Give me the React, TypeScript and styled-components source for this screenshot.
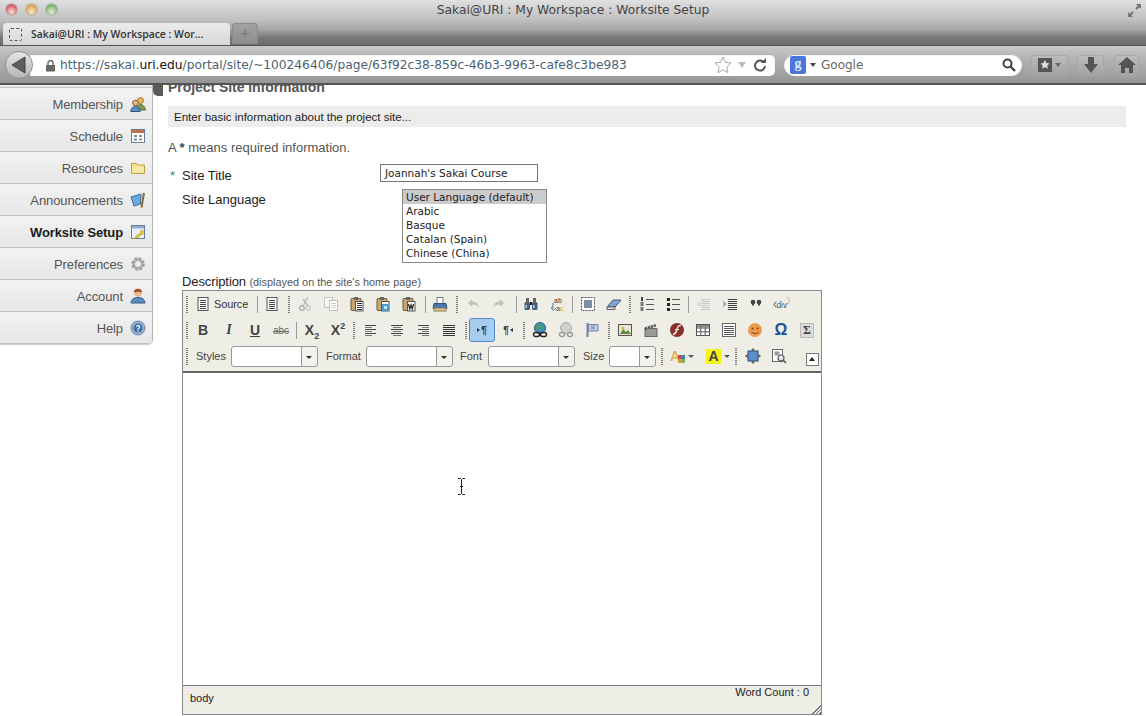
import React from "react";
import styled, { createGlobalStyle } from "styled-components";

const GlobalStyle = createGlobalStyle`
  html, body {
    margin: 0;
    height: 716px;
    overflow: hidden;
    background: #fff;
    font-family: "Liberation Sans", Arial, sans-serif;
  }
`;

const Svg = ({ size = 16, children }: { size?: number; children: React.ReactNode }) => (
  <svg width={size} height={size} viewBox="0 0 16 16">
    {children}
  </svg>
);

const Lines = ({ x, w, ys, c = "#555" }: { x: number; w: number; ys: number[]; c?: string }) => (
  <>
    {ys.map((y) => (
      <rect key={y} x={x} y={y} width={w} height="1" fill={c} />
    ))}
  </>
);

const Clip = ({ children }: { children?: React.ReactNode }) => (
  <>
    <rect x="2" y="2.5" width="10" height="12" rx="1" fill="#c9a66b" stroke="#6b5a3c" />
    <rect x="5" y="1" width="4" height="3" fill="#666" />
    <rect x="6.5" y="5.5" width="7.5" height="9.5" fill="#fff" stroke="#555" />
    {children}
  </>
);

const icons: Record<string, React.ReactNode> = {
  page: (
    <Svg>
      <rect x="3" y="1.5" width="10" height="13" fill="#fff" stroke="#555" />
      <Lines x={5} w={6} ys={[4, 6, 8, 10, 12]} c="#444" />
    </Svg>
  ),
  cut: (
    <Svg>
      <path d="M11 1 6 10M6 3l5 7" stroke="#bbb" strokeWidth="1.4" fill="none" />
      <circle cx="5" cy="12" r="2.2" fill="none" stroke="#b0b0b0" strokeWidth="1.4" />
      <circle cx="11" cy="12" r="2.2" fill="none" stroke="#c8c8c8" strokeWidth="1.4" />
    </Svg>
  ),
  copy: (
    <Svg>
      <rect x="1.5" y="1.5" width="8" height="10" fill="#f8f8f4" stroke="#c4c4c4" />
      <rect x="6.5" y="4.5" width="8" height="10" fill="#fff" stroke="#bdbdbd" />
      <Lines x={8} w={5} ys={[7, 9, 11]} c="#ccc" />
    </Svg>
  ),
  paste: (
    <Svg>
      <Clip>
        <Lines x={8} w={5} ys={[7, 9, 11, 13]} c="#333" />
      </Clip>
    </Svg>
  ),
  pasteText: (
    <Svg>
      <Clip>
        <rect x="7" y="8" width="7" height="7" fill="#4d9bd0" />
        <rect x="9" y="10" width="3" height="3" fill="#bfe4f7" />
      </Clip>
    </Svg>
  ),
  pasteWord: (
    <Svg>
      <Clip>
        <path d="M7.5 8l1.2 5 1.3-4 1.3 4 1.2-5" stroke="#222" fill="none" strokeWidth="1.2" />
      </Clip>
    </Svg>
  ),
  print: (
    <Svg>
      <rect x="5" y="1.5" width="6" height="6" fill="#fff" stroke="#777" />
      <path d="M2 7.5h12l1 5H1z" fill="#4a78b5" stroke="#34527c" />
      <rect x="2" y="12" width="12" height="3" fill="#d9c690" stroke="#8d7f55" />
    </Svg>
  ),
  undo: (
    <Svg>
      <path d="M3 7l4-4v2.6c4 0 6.5 2 6.5 6-1.4-2.4-3.4-3-6.5-3V11z" fill="#c2c2bc" />
    </Svg>
  ),
  redo: (
    <Svg>
      <path d="M13 7L9 3v2.6c-4 0-6.5 2-6.5 6C3.9 9.2 5.9 8.6 9 8.6V11z" fill="#c2c2bc" />
    </Svg>
  ),
  find: (
    <Svg>
      <rect x="1.5" y="6" width="5.5" height="8" rx="1.5" fill="#40607f" />
      <rect x="9" y="6" width="5.5" height="8" rx="1.5" fill="#40607f" />
      <rect x="3" y="2" width="3" height="5" fill="#666" />
      <rect x="10" y="2" width="3" height="5" fill="#666" />
      <rect x="7" y="6" width="2" height="3" fill="#222" />
      <rect x="2.5" y="9" width="1.5" height="3" fill="#b9cbdc" />
      <rect x="10" y="9" width="1.5" height="3" fill="#b9cbdc" />
    </Svg>
  ),
  replace: (
    <Svg>
      <text x="5" y="7" fontSize="7" fontFamily="Liberation Sans" fill="#333">ab</text>
      <text x="7" y="15" fontSize="7" fontFamily="Liberation Sans" fill="#444">a<tspan fill="#c9a23e">c</tspan></text>
      <path d="M4 7v5H2l2.5 2.5L7 12" fill="none" stroke="#3a6ea5" />
    </Svg>
  ),
  selectAll: (
    <Svg>
      <rect x="1.5" y="1.5" width="13" height="13" fill="#fff" stroke="#555" strokeDasharray="2 1" />
      <rect x="4" y="4" width="8" height="8" fill="#7d8ea3" />
    </Svg>
  ),
  eraser: (
    <Svg>
      <path d="M1 11l6-7h8l-6 7z" fill="#7aa7d6" stroke="#42566e" />
      <path d="M1 11h8v2.5H1z" fill="#e8e8e8" stroke="#5a5a5a" />
    </Svg>
  ),
  ol: (
    <Svg>
      <Lines x={7} w={8} ys={[3, 8, 13]} c="#555" />
      <rect x="2" y="1" width="2" height="4" fill="#444" />
      <rect x="1.5" y="6" width="3" height="4" fill="#777" />
      <rect x="1.5" y="11" width="3" height="4" fill="#777" />
    </Svg>
  ),
  ul: (
    <Svg>
      <Lines x={7} w={8} ys={[3, 8, 13]} c="#555" />
      <rect x="2" y="2" width="3" height="3" fill="#222" />
      <rect x="2" y="7" width="3" height="3" fill="#222" />
      <rect x="2" y="12" width="3" height="3" fill="#222" />
    </Svg>
  ),
  outdent: (
    <Svg>
      <Lines x={5} w={9} ys={[3, 5, 7, 9, 11, 13]} c="#c8c8c4" />
      <path d="M1 8l3-3v6z" fill="#d6d6d0" />
    </Svg>
  ),
  indent: (
    <Svg>
      <Lines x={6} w={9} ys={[3, 5, 7, 9, 11, 13]} c="#444" />
      <path d="M5 8L1 5v6z" fill="#9fb3a0" />
    </Svg>
  ),
  quote: (
    <Svg>
      <circle cx="5" cy="6" r="2.3" fill="#444" />
      <path d="M3 6.5h4l-2 4z" fill="#444" />
      <circle cx="11" cy="6" r="2.3" fill="#444" />
      <path d="M9 6.5h4l-2 4z" fill="#444" />
    </Svg>
  ),
  div: (
    <Svg size={18}>
      <path d="M3 6 .8 8.5 3 11" stroke="#777" fill="none" />
      <text x="3" y="11.5" fontSize="7.5" fontFamily="Liberation Sans" fill="#555">div</text>
      <path d="M13 2l2 3-2 3" stroke="#b59a3c" fill="none" strokeDasharray="1 1" />
    </Svg>
  ),
  alignLeft: <Svg><Lines x={2} w={11} ys={[3, 7, 11]} c="#444" /><Lines x={2} w={7} ys={[5, 9, 13]} c="#777" /></Svg>,
  alignCenter: <Svg><Lines x={2} w={12} ys={[3, 7, 11]} c="#444" /><Lines x={4} w={8} ys={[5, 9, 13]} c="#777" /></Svg>,
  alignRight: <Svg><Lines x={3} w={11} ys={[3, 7, 11]} c="#444" /><Lines x={7} w={7} ys={[5, 9, 13]} c="#777" /></Svg>,
  justify: <Svg><Lines x={2} w={12} ys={[3, 5, 7, 9, 11, 13]} c="#333" /></Svg>,
  link: (
    <Svg>
      <circle cx="8" cy="6" r="5.5" fill="#3f8fbf" stroke="#2d5a73" />
      <path d="M4 3l4 1 1 3-4 1zM10 2l2 3-1 2z" fill="#4fa046" />
      <rect x="1.5" y="10.5" width="6" height="4" rx="2" fill="none" stroke="#222" strokeWidth="1.4" />
      <rect x="8.5" y="10.5" width="6" height="4" rx="2" fill="none" stroke="#222" strokeWidth="1.4" />
    </Svg>
  ),
  unlink: (
    <Svg>
      <circle cx="8" cy="6" r="5.5" fill="#cfcfcb" stroke="#aaa" />
      <rect x="1.5" y="10.5" width="5" height="4" rx="2" fill="none" stroke="#999" strokeWidth="1.4" />
      <rect x="9.5" y="10.5" width="5" height="4" rx="2" fill="none" stroke="#999" strokeWidth="1.4" />
    </Svg>
  ),
  anchor: (
    <Svg>
      <rect x="2.5" y="1" width="2" height="14" fill="#7d7fa0" />
      <path d="M4.5 2.5h9.5v6.5H4.5z" fill="#c3d0e6" stroke="#7d7fa0" />
      <path d="M7 3.5h4v4H7z" fill="#8ea5c8" />
    </Svg>
  ),
  image: (
    <Svg>
      <rect x="1.5" y="2.5" width="13" height="11" fill="#e9e6d6" stroke="#555" />
      <path d="M3 12l3-5 3 3 2-2 3 4z" fill="#5d8a45" />
      <circle cx="6" cy="6" r="1.5" fill="#d2b64f" />
    </Svg>
  ),
  clapper: (
    <Svg>
      <rect x="2" y="6.5" width="12" height="8" fill="#9a9a94" stroke="#666" />
      <path d="M1.5 5.5l11-3.5.8 2.5-11 3.5z" fill="#555" />
      <path d="M4 4.8l1 2M7 3.8l1 2M10 2.9l1 2" stroke="#ddd" />
    </Svg>
  ),
  flash: (
    <Svg>
      <circle cx="8" cy="8" r="7" fill="#8a2f2a" />
      <path d="M12 3.5C9 3.5 8.500 5 7.800 8S6.500 12 4 12.500" stroke="#f0e0d8" strokeWidth="1.6" fill="none" />
      <path d="M6 7.5h4" stroke="#f0e0d8" />
    </Svg>
  ),
  table: (
    <Svg>
      <rect x="1.5" y="2.5" width="13" height="11" fill="#fff" stroke="#555" />
      <path d="M1.5 6h13M1.5 9.8h13M5.8 2.5v11M10.2 2.5v11" stroke="#555" />
      <rect x="2" y="3" width="12" height="2.5" fill="#888" />
    </Svg>
  ),
  hr: (
    <Svg>
      <rect x="1.5" y="1.5" width="13" height="13" fill="#fff" stroke="#666" />
      <Lines x={3} w={10} ys={[4, 6, 8, 10, 12]} c="#555" />
    </Svg>
  ),
  smiley: (
    <Svg>
      <circle cx="8" cy="8" r="7" fill="#ec9c4f" />
      <circle cx="5.5" cy="6.5" r="1" fill="#7a3f12" />
      <circle cx="10.5" cy="6.5" r="1" fill="#7a3f12" />
      <path d="M4.5 10c2 2 5 2 7 0" stroke="#7a3f12" fill="none" />
    </Svg>
  ),
  maximize: (
    <Svg>
      <rect x="3" y="3" width="10" height="10" fill="#5d90c9" stroke="#2f4d75" />
      <path d="M8 0l2 2.5H6zM8 16l2-2.5H6zM0 8l2.5-2v4zM16 8l-2.5-2v4z" fill="#555" />
    </Svg>
  ),
  blocks: (
    <Svg>
      <rect x="1.5" y="1.5" width="10" height="12" fill="#fff" stroke="#666" />
      <rect x="3.5" y="3.5" width="5" height="4" fill="#999" />
      <circle cx="10" cy="10" r="3" fill="#dfe8ee" stroke="#555" strokeWidth="1.2" />
      <path d="M12 12l3 3" stroke="#555" strokeWidth="1.6" />
    </Svg>
  ),
  membership: (
    <Svg>
      <circle cx="10.5" cy="4.5" r="3" fill="#e8b860" stroke="#a07a28" />
      <path d="M7 14c0-4 2-5.5 3.5-5.5S15 10 15.5 14z" fill="#78a04a" stroke="#4e6c2c" />
      <circle cx="5.5" cy="7" r="2.8" fill="#e6b78c" stroke="#8a5a30" />
      <path d="M.8 15.5c0-3.5 2.5-5 4.7-5s4.500 1.500 4.700 5z" fill="#5d8fc4" stroke="#38587e" />
    </Svg>
  ),
  schedule: (
    <Svg>
      <rect x="1.5" y="1.5" width="13" height="13" fill="#fff" stroke="#6a7f95" />
      <rect x="2" y="2" width="12" height="3" fill="#c0724e" />
      <rect x="4" y="7" width="3" height="2" fill="#888" />
      <rect x="9" y="7" width="3" height="2" fill="#888" />
      <rect x="4" y="10.5" width="3" height="2" fill="#5d8fc4" />
      <rect x="9" y="10.5" width="3" height="2" fill="#999" />
    </Svg>
  ),
  folder: (
    <Svg>
      <path d="M1.5 3.5h5l1 1.5h7v8.5h-13z" fill="#f5e08e" stroke="#b8a04c" />
      <rect x="2.5" y="6.5" width="11" height="6" fill="#f8eaa8" />
    </Svg>
  ),
  announce: (
    <Svg>
      <path d="M1 5l10-3-.5 10L4 14z" fill="#6da9dc" stroke="#3d6d9c" />
      <path d="M14 1l-2.500 14.500" stroke="#8a6a3c" strokeWidth="2" />
    </Svg>
  ),
  setup: (
    <Svg>
      <rect x="1.5" y="1.5" width="13" height="13" fill="#eaf0f6" stroke="#6a7f95" />
      <rect x="2" y="2" width="12" height="2.5" fill="#8fb0d0" />
      <path d="M13 6l-3 1.500 1 1L6 12l-2 3 4-1.500 4-3.500 1 1z" fill="#e3c53c" stroke="#b09420" strokeWidth=".5" />
    </Svg>
  ),
  gear: (
    <Svg>
      <circle cx="8" cy="8" r="5" fill="none" stroke="#999" strokeWidth="3.5" strokeDasharray="2.4 1.53" />
      <circle cx="8" cy="8" r="4.2" fill="none" stroke="#aaa" strokeWidth="2.4" />
    </Svg>
  ),
  account: (
    <Svg>
      <circle cx="8" cy="5" r="3.8" fill="#eab78c" />
      <path d="M3.800 4.500C4 1.500 6 .8 8 .8s4 .7 4.200 3.700c-2-.9-6-.9-8.400 0z" fill="#a04f28" />
      <path d="M1 15c0-3.500 3-5.500 7-5.500s7 2 7 5.500z" fill="#5d8fc4" stroke="#38587e" />
    </Svg>
  ),
  help: (
    <Svg>
      <circle cx="8" cy="8" r="7" fill="#9ab3cc" stroke="#6d8bab" />
      <circle cx="8" cy="8" r="4.6" fill="#3e74ad" />
      <path d="M6.400 6.800C6.600 5.200 9.600 5.200 9.700 7 9.700 8.200 8 8.200 8 9.500" stroke="#fff" fill="none" strokeWidth="1.2" />
      <rect x="7.4" y="10.3" width="1.3" height="1.3" fill="#fff" />
    </Svg>
  ),
};

const App = () => (
  <>
    <GlobalStyle />
    <Page>
      <TitleBar>
        <Lights>
          <Light $c="#d8606c" />
          <Light $c="#d9a94e" />
          <Light $c="#79b96b" />
        </Lights>
        <WindowTitle>Sakai@URI : My Workspace : Worksite Setup</WindowTitle>
        <FullScreen>
          <svg width="13" height="13" viewBox="0 0 13 13">
            <path d="M13 0H8l1.700 1.700-2.500 2.500 1.600 1.600 2.500-2.500L13 5zM0 13h5l-1.700-1.700 2.500-2.500-1.600-1.600-2.500 2.500L0 8z" fill="#777" />
          </svg>
        </FullScreen>
      </TitleBar>
      <TabStrip>
        <ActiveTab>
          <TabFavicon />
          <TabLabel>Sakai@URI : My Workspace : Wor...</TabLabel>
        </ActiveTab>
        <NewTab>+</NewTab>
      </TabStrip>
      <NavBar>
        <BackButton>
          <svg width="16" height="18" viewBox="0 0 16 18">
            <path d="M14 1v16L1 9z" fill="#5d5d5d" stroke="#444" />
          </svg>
        </BackButton>
        <UrlBox>
          <svg width="11" height="13" viewBox="0 0 11 13">
            <path d="M3 6V4a2.500 2.500 0 0 1 5 0v2" stroke="#666" strokeWidth="1.4" fill="none" />
            <rect x="1" y="6" width="9" height="6.5" fill="#666" />
          </svg>
          <UrlText>
            <span>https://sakai.</span>
            <strong>uri.edu</strong>
            <span>/portal/site/~100246406/page/63f92c38-859c-46b3-9963-cafe8c3be983</span>
          </UrlText>
          <svg width="20" height="20" viewBox="0 0 20 20">
            <path d="M10 2l2.400 5.300 5.600.7-4.100 3.900 1.100 5.800-5-2.900-5 2.900 1.100-5.800L2 8l5.600-.7z" fill="#fff" stroke="#aaa" />
          </svg>
          <UrlCaret />
          <svg width="14" height="14" viewBox="0 0 14 14">
            <path d="M11 4.500A5 5 0 1 0 12 8" stroke="#555" strokeWidth="2" fill="none" />
            <path d="M8 5h5V0z" fill="#555" />
          </svg>
        </UrlBox>
        <SearchBox>
          <GoogleBadge>g</GoogleBadge>
          <SearchCaret />
          <SearchText>Google</SearchText>
          <svg width="14" height="14" viewBox="0 0 14 14">
            <circle cx="5.5" cy="5.5" r="4" fill="none" stroke="#444" strokeWidth="2" />
            <path d="M8.500 8.500 13 13" stroke="#444" strokeWidth="2.4" />
          </svg>
        </SearchBox>
        <ChromeButton $w={37} $ml={9}>
          <svg width="26" height="16" viewBox="0 0 26 16">
            <rect x="1" y="1" width="14" height="14" fill="#555" />
            <path d="M8 3l1.500 3 3 .4-2.200 2.200.6 3.200L8 10.300l-2.900 1.500.6-3.200-2.200-2.200 3-.4z" fill="#ddd" />
            <path d="M18 6h6l-3 4z" fill="#666" />
          </svg>
        </ChromeButton>
        <ChromeButton $w={27} $ml={9}>
          <svg width="16" height="18" viewBox="0 0 16 18">
            <path d="M5 1h6v7h4l-7 9-7-9h4z" fill="#555" />
          </svg>
        </ChromeButton>
        <ChromeButton $w={25} $ml={10}>
          <svg width="18" height="18" viewBox="0 0 18 18">
            <path d="M9 1 0 9h3v8h4v-5h4v5h4V9h3z" fill="#555" />
          </svg>
        </ChromeButton>
      </NavBar>

      <Body>
        <Sidebar>
          <SideTop />
          {menu.map((m) => (
            <SideItem key={m.label}>
              <SideLabel $active={m.active}>{m.label}</SideLabel>
              {icons[m.icon]}
            </SideItem>
          ))}
        </Sidebar>

        <Main>
          <Heading>
            <HeadingMark />
            <HeadingText>Project Site Information</HeadingText>
          </Heading>
          <InfoBar>Enter basic information about the project site...</InfoBar>
          <Required>
            A <Star>*</Star> means required information.
          </Required>
          <TitleRow>
            <ReqMark>*</ReqMark>
            <TitleLabel $w={198}>Site Title</TitleLabel>
            <TitleInput>Joannah's Sakai Course</TitleInput>
          </TitleRow>
          <LanguageRow>
            <FieldLabel $w={220}>Site Language</FieldLabel>
            <LangList>
              {languages.map((l, i) => (
                <LangOption key={l} $selected={i === 0}>
                  {l}
                </LangOption>
              ))}
            </LangList>
          </LanguageRow>
          <DescLabel>
            Description <small>(displayed on the site's home page)</small>
          </DescLabel>

          <Editor>
            <Toolbar>
              <ToolRow>
                <Grip $mr={7} />
                <SourceTool>
                  {icons.page}
                  <span>Source</span>
                </SourceTool>
                <Sep $ml={4} $mr={1} />
                <Tool>{icons.page}</Tool>
                <Grip $ml={3} $mr={2} />
                <Tool>{icons.cut}</Tool>
                <Tool>{icons.copy}</Tool>
                <Tool>{icons.paste}</Tool>
                <Tool>{icons.pasteText}</Tool>
                <Tool>{icons.pasteWord}</Tool>
                <Sep $ml={3} $mr={1} />
                <Tool>{icons.print}</Tool>
                <Grip $ml={3} $mr={2} />
                <Tool>{icons.undo}</Tool>
                <Tool>{icons.redo}</Tool>
                <Sep $ml={4} $mr={1} />
                <Tool>{icons.find}</Tool>
                <Tool>{icons.replace}</Tool>
                <Sep $ml={2} $mr={2} />
                <Tool>{icons.selectAll}</Tool>
                <Tool>{icons.eraser}</Tool>
                <Grip $ml={2} $mr={3} />
                <Tool>{icons.ol}</Tool>
                <Tool>{icons.ul}</Tool>
                <Sep $ml={2} $mr={2} />
                <Tool>{icons.outdent}</Tool>
                <Tool>{icons.indent}</Tool>
                <Tool>{icons.quote}</Tool>
                <Tool>{icons.div}</Tool>
              </ToolRow>
              <ToolRow>
                <Grip $mr={2} />
                <Tool><Glyph $bold>B</Glyph></Tool>
                <Tool><Glyph $italic>I</Glyph></Tool>
                <Tool><Glyph $bold $under>U</Glyph></Tool>
                <Tool><Strike>abc</Strike></Tool>
                <Sep $ml={2} $mr={2} />
                <Tool><Glyph $bold>X<sub>2</sub></Glyph></Tool>
                <Tool><Glyph $bold>X<sup>2</sup></Glyph></Tool>
                <Grip $ml={2} $mr={3} />
                <Tool>{icons.alignLeft}</Tool>
                <Tool>{icons.alignCenter}</Tool>
                <Tool>{icons.alignRight}</Tool>
                <Tool>{icons.justify}</Tool>
                <Grip $ml={3} $mr={2} />
                <Tool $active><Para><Arrow $dir="right" />¶</Para></Tool>
                <Tool><Para>¶<Arrow $dir="left" /></Para></Tool>
                <Grip $ml={2} $mr={2} />
                <Tool>{icons.link}</Tool>
                <Tool>{icons.unlink}</Tool>
                <Tool>{icons.anchor}</Tool>
                <Grip $ml={3} $mr={2} />
                <Tool>{icons.image}</Tool>
                <Tool>{icons.clapper}</Tool>
                <Tool>{icons.flash}</Tool>
                <Tool>{icons.table}</Tool>
                <Tool>{icons.hr}</Tool>
                <Tool>{icons.smiley}</Tool>
                <Tool><Omega>Ω</Omega></Tool>
                <Tool><Sigma>Σ</Sigma></Tool>
              </ToolRow>
              <ToolRow>
                <Grip $mr={8} />
                <ComboLabel $w={35}>Styles</ComboLabel>
                <Combo $w={87} />
                <ComboLabel $w={40} $ml={8}>Format</ComboLabel>
                <Combo $w={87} />
                <ComboLabel $w={28} $ml={7}>Font</ComboLabel>
                <Combo $w={87} />
                <ComboLabel $w={26} $ml={8}>Size</ComboLabel>
                <Combo $w={47} />
                <Grip $ml={5} $mr={4} />
                <ColorTool $w={36}>
                  <TextColorA>A</TextColorA>
                  <Swatches />
                  <MiniCaret />
                </ColorTool>
                <ColorTool $w={29}>
                  <BgColorA>A</BgColorA>
                  <MiniCaret />
                </ColorTool>
                <Grip $ml={3} $mr={3} />
                <Tool>{icons.maximize}</Tool>
                <Tool>{icons.blocks}</Tool>
                <Collapse />
              </ToolRow>
            </Toolbar>
            <EditArea>
              <IBeam>
                <svg width="9" height="17" viewBox="0 0 9 17">
                  <path d="M1 .5h2.500l1 1 1-1H8M4.500 1.500v14M1 16.500h2.500l1-1 1 1H8M3 8.500h3" stroke="#222" fill="none" />
                </svg>
              </IBeam>
            </EditArea>
            <StatusBar>
              <PathLabel>body</PathLabel>
              <span>Word Count : 0</span>
              <Resize />
            </StatusBar>
          </Editor>
        </Main>
      </Body>
    </Page>
  </>
);

const menu = [
  { label: "Membership", icon: "membership" },
  { label: "Schedule", icon: "schedule" },
  { label: "Resources", icon: "folder" },
  { label: "Announcements", icon: "announce" },
  { label: "Worksite Setup", icon: "setup", active: true },
  { label: "Preferences", icon: "gear" },
  { label: "Account", icon: "account" },
  { label: "Help", icon: "help" },
];

const languages = ["User Language (default)", "Arabic", "Basque", "Catalan (Spain)", "Chinese (China)"];

const Page = styled.div`
  width: 1146px;
  height: 716px;
  display: flex;
  flex-direction: column;
  overflow: hidden;
`;

const TitleBar = styled.div`
  height: 21px;
  flex: none;
  display: flex;
  align-items: center;
  padding: 0 4px 2px 6px;
  box-sizing: border-box;
  background: linear-gradient(#e0e0e0, #bebebe);
`;

const Lights = styled.div`
  display: flex;
  gap: 9px;
  width: 70px;
`;

const Light = styled.div<{ $c: string }>`
  width: 11px;
  height: 11px;
  border-radius: 50%;
  background: radial-gradient(circle at 50% 70%, #f4e4d8 0, ${(p) => p.$c} 65%);
  box-shadow: 0 0 0 0.5px #888;
`;

const WindowTitle = styled.div`
  flex: 1;
  text-align: center;
  font-family: "DejaVu Sans", sans-serif;
  font-size: 12.3px;
  color: #444;
  padding-right: 58px;
`;

const FullScreen = styled.div`
  width: 14px;
  height: 14px;
`;

const TabStrip = styled.div`
  height: 25px;
  flex: none;
  display: flex;
  align-items: flex-end;
  padding-left: 3px;
  gap: 2px;
  box-sizing: border-box;
  border-bottom: 1px solid #555;
  background: linear-gradient(#bcbcbc, #a5a5a5 35%, #777 70%, #6d6d6d);
`;

const ActiveTab = styled.div`
  width: 227px;
  height: 22px;
  box-sizing: border-box;
  display: flex;
  align-items: center;
  padding-left: 6px;
  gap: 9px;
  border-radius: 4px 4px 0 0;
  background: linear-gradient(#ececec, #d6d6d6);
`;

const TabFavicon = styled.div`
  width: 13px;
  height: 13px;
  flex: none;
  box-sizing: border-box;
  border: 1px dashed #555;
  border-radius: 2px;
`;

const TabLabel = styled.div`
  font-family: "Open Sans", sans-serif;
  font-size: 10.4px;
  font-weight: 600;
  color: #333;
  white-space: nowrap;
`;

const NewTab = styled.div`
  width: 26px;
  height: 21px;
  margin-bottom: 1px;
  border-radius: 4px 4px 0 0;
  border: 1px solid #8a8a8a;
  border-bottom: 0;
  box-sizing: border-box;
  text-align: center;
  font: 16px/19px "Liberation Sans", sans-serif;
  color: #777;
  background: linear-gradient(#a2a2a2, #8c8c8c);
`;

const NavBar = styled.div`
  height: 39px;
  flex: none;
  display: flex;
  align-items: center;
  padding: 1px 6px 0 5px;
  box-sizing: border-box;
  border-bottom: 2px solid #555;
  background: linear-gradient(#c8c8c8, #b0b0b0 40%, #969696);
`;

const BackButton = styled.div`
  position: relative;
  z-index: 1;
  width: 28px;
  height: 28px;
  flex: none;
  box-sizing: border-box;
  margin-right: -3px;
  display: flex;
  align-items: center;
  justify-content: center;
  border-radius: 50%;
  border: 1px solid #8f8f8f;
  background: linear-gradient(#e6e6e6, #b5b5b5);
`;

const UrlBox = styled.div`
  width: 745px;
  height: 22px;
  flex: none;
  box-sizing: border-box;
  display: flex;
  align-items: center;
  padding: 0 8px 0 15px;
  border-radius: 0 5px 5px 0;
  background: #fff;
  box-shadow: inset 0 1px 1px #aaa;
`;

const UrlText = styled.div`
  flex: 1;
  margin-left: 4px;
  font-family: "DejaVu Sans", sans-serif;
  font-size: 12.24px;
  color: #4d5f73;
  white-space: nowrap;
  overflow: hidden;
  strong {
    font-weight: 400;
    color: #111;
  }
`;

const Caret = styled.div`
  width: 0;
  height: 0;
  border-left: 4px solid transparent;
  border-right: 4px solid transparent;
  border-top: 6px solid #444;
`;

const UrlCaret = styled(Caret)`
  margin: 0 7px 0 5px;
  border-top-color: #bbb;
`;

const SearchBox = styled.div`
  width: 238px;
  height: 22px;
  flex: none;
  margin-left: 9px;
  box-sizing: border-box;
  display: flex;
  align-items: center;
  padding: 0 6px 0 6px;
  border-radius: 11px;
  background: #fff;
  box-shadow: inset 0 1px 1px #aaa;
`;

const GoogleBadge = styled.div`
  width: 16px;
  height: 18px;
  flex: none;
  border-radius: 2px;
  background: #4a78d8;
  color: #dfe9ff;
  font: bold 14px/15px "Liberation Serif", serif;
  text-align: center;
`;

const SearchCaret = styled(Caret)`
  margin: 0 5px 0 4px;
  border-width: 4px 3px 0;
`;

const SearchText = styled.div`
  flex: 1;
  font-family: "DejaVu Sans", sans-serif;
  font-size: 12px;
  color: #666;
`;

const ChromeButton = styled.div<{ $w: number; $ml: number }>`
  width: ${(p) => p.$w}px;
  height: 21px;
  flex: none;
  margin-left: ${(p) => p.$ml}px;
  box-sizing: border-box;
  display: flex;
  align-items: center;
  justify-content: center;
  border: 1px solid #a8a8a8;
  border-radius: 3px;
  background: linear-gradient(#bcbcbc, #a2a2a2);
`;

const Body = styled.div`
  flex: 1;
  display: flex;
  min-height: 0;
  background: #fff;
`;

const Sidebar = styled.div`
  width: 153px;
  flex: none;
  align-self: flex-start;
  box-sizing: border-box;
  border-right: 1px solid #b5b5b5;
  border-radius: 0 0 5px 0;
  overflow: hidden;
  box-shadow: 0 1px 1px #ccc;
`;

const SideTop = styled.div`
  height: 3px;
  background: #ececec;
  border-bottom: 1px solid #c4c4c4;
  box-sizing: border-box;
`;

const SideItem = styled.div`
  height: 32px;
  box-sizing: border-box;
  display: flex;
  align-items: center;
  justify-content: flex-end;
  gap: 7px;
  padding: 1px 6px 0 0;
  border-bottom: 1px solid #c2c2c2;
  background: linear-gradient(#f3f3f3, #e6e6e6);
`;

const SideLabel = styled.span<{ $active?: boolean }>`
  font-size: 13px;
  letter-spacing: -0.1px;
  font-weight: ${(p) => (p.$active ? 700 : 400)};
  color: ${(p) => (p.$active ? "#1a1a1a" : "#555")};
`;

const Main = styled.div`
  flex: 1;
  min-width: 0;
  display: flex;
  flex-direction: column;
  overflow: hidden;
`;

const Heading = styled.div`
  display: flex;
  align-items: flex-end;
  margin-top: -7px;
  height: 18px;
  flex: none;
`;

const HeadingMark = styled.div`
  width: 10px;
  height: 11px;
  margin-right: 5px;
  background: #5a5a5a;
  border-radius: 0 0 0 5px;
`;

const HeadingText = styled.div`
  font-size: 14px;
  font-weight: 700;
  line-height: 18px;
  letter-spacing: -0.05px;
  color: #555;
`;

const InfoBar = styled.div`
  flex: none;
  height: 21px;
  margin: 10px 20px 0 15px;
  padding-left: 6px;
  font-size: 11.5px;
  line-height: 22px;
  color: #222;
  background: #ececec;
`;

const Required = styled.div`
  flex: none;
  margin: 12px 0 0 15px;
  font-size: 13px;
  line-height: 18px;
  color: #555;
`;

const Star = styled.span`
  font-weight: 700;
  color: #345;
`;

const TitleRow = styled.div`
  flex: none;
  display: flex;
  margin: 7px 0 0 15px;
`;

const ReqMark = styled.div`
  width: 14px;
  padding: 3px 0 0 2px;
  box-sizing: border-box;
  font-size: 13px;
  line-height: 18px;
  color: #3a7f7a;
`;

const FieldLabel = styled.div<{ $w: number }>`
  width: ${(p) => p.$w}px;
  flex: none;
  padding-top: 2px;
  font-size: 13px;
  line-height: 18px;
  color: #222;
`;

const TitleLabel = styled(FieldLabel)`
  padding-top: 3px;
`;

const TitleInput = styled.div`
  width: 158px;
  height: 18px;
  box-sizing: border-box;
  padding-left: 4px;
  border: 1px solid #777;
  font-family: "DejaVu Sans", sans-serif;
  font-size: 10.5px;
  line-height: 16px;
  color: #222;
  white-space: nowrap;
`;

const LanguageRow = styled.div`
  flex: none;
  display: flex;
  margin: 4px 0 0 29px;
`;

const LangList = styled.div`
  width: 145px;
  height: 74px;
  box-sizing: border-box;
  border: 1px solid #888;
`;

const LangOption = styled.div<{ $selected?: boolean }>`
  height: 14px;
  padding-left: 3px;
  font-family: "DejaVu Sans", sans-serif;
  font-size: 10.5px;
  line-height: 15px;
  color: #222;
  white-space: nowrap;
  background: ${(p) => (p.$selected ? "#cbcbcb" : "#fff")};
`;

const DescLabel = styled.div`
  flex: none;
  margin: 9px 0 0 29px;
  height: 18px;
  font-size: 13px;
  line-height: 20px;
  letter-spacing: -0.1px;
  color: #222;
  small {
    font-size: 10.9px;
    letter-spacing: 0;
    color: #555;
  }
`;

const Editor = styled.div`
  position: relative;
  flex: none;
  width: 640px;
  height: 425px;
  margin-left: 29px;
  box-sizing: border-box;
  display: flex;
  flex-direction: column;
  border: 1px solid #8a8a8a;
  background: #fff;
`;

const Toolbar = styled.div`
  flex: none;
  height: 82px;
  box-sizing: border-box;
  border-bottom: 2px solid #666;
  background: #eeeee6;
`;

const ToolRow = styled.div`
  display: flex;
  align-items: center;
  height: 26px;
`;

const Grip = styled.div<{ $ml?: number; $mr?: number }>`
  width: 2px;
  height: 17px;
  flex: none;
  margin: 0 ${(p) => p.$mr ?? 0}px 0 ${(p) => p.$ml ?? 3}px;
  background: repeating-linear-gradient(#777 0 1px, #eeeee6 1px 2px);
`;

const Sep = styled.div<{ $ml: number; $mr: number }>`
  width: 1px;
  height: 17px;
  flex: none;
  margin: 0 ${(p) => p.$mr}px 0 ${(p) => p.$ml}px;
  background: #999;
`;

const Tool = styled.div<{ $active?: boolean }>`
  width: 26px;
  height: 24px;
  flex: none;
  box-sizing: border-box;
  display: flex;
  align-items: center;
  justify-content: center;
  border-radius: 3px;
  border: 1px solid ${(p) => (p.$active ? "#4f8cc4" : "transparent")};
  background: ${(p) => (p.$active ? "#a6cdf0" : "transparent")};
`;

const SourceTool = styled.div`
  width: 58px;
  height: 24px;
  flex: none;
  box-sizing: border-box;
  display: flex;
  align-items: center;
  gap: 3px;
  font-size: 11px;
  letter-spacing: -0.1px;
  color: #333;
`;

const Glyph = styled.span<{ $bold?: boolean; $italic?: boolean; $under?: boolean }>`
  font-family: ${(p) => (p.$italic ? '"Liberation Serif", serif' : '"Liberation Sans", sans-serif')};
  font-size: 14px;
  line-height: 16px;
  font-weight: ${(p) => (p.$bold || p.$italic ? 700 : 400)};
  font-style: ${(p) => (p.$italic ? "italic" : "normal")};
  text-decoration: ${(p) => (p.$under ? "underline" : "none")};
  color: #444;
  sub, sup {
    font-size: 9px;
    line-height: 0;
  }
`;

const Strike = styled.span`
  font-size: 10px;
  color: #666;
  text-decoration: line-through;
`;

const Para = styled.span`
  display: flex;
  align-items: center;
  gap: 1px;
  font: bold 10px "Liberation Sans", sans-serif;
  color: #333;
  white-space: nowrap;
`;

const Arrow = styled.span<{ $dir: "left" | "right" }>`
  width: 0;
  height: 0;
  border-top: 2px solid transparent;
  border-bottom: 2px solid transparent;
  ${(p) => (p.$dir === "right" ? "border-left: 3px solid #333;" : "border-right: 3px solid #333;")}
`;

const Omega = styled.span`
  font: bold 16px "Liberation Sans", sans-serif;
  color: #234f96;
`;

const Sigma = styled.span`
  width: 14px;
  height: 15px;
  background: #ddd;
  border: 1px solid #bbb;
  box-sizing: border-box;
  text-align: center;
  font: bold 12px/13px "Liberation Serif", serif;
  color: #444;
`;

const ComboLabel = styled.div<{ $w: number; $ml?: number }>`
  width: ${(p) => p.$w}px;
  flex: none;
  margin-left: ${(p) => p.$ml ?? 0}px;
  font-size: 11px;
  color: #444;
`;

const Combo = styled.div<{ $w: number }>`
  position: relative;
  width: ${(p) => p.$w}px;
  height: 21px;
  flex: none;
  box-sizing: border-box;
  border: 1px solid #999;
  border-radius: 3px;
  background: linear-gradient(90deg, #fff calc(100% - 16px), #999 calc(100% - 16px), #999 calc(100% - 15px), #f2f2ea calc(100% - 15px));
  &::after {
    content: "";
    position: absolute;
    right: 5px;
    top: 9px;
    border-left: 3px solid transparent;
    border-right: 3px solid transparent;
    border-top: 3px solid #333;
  }
`;

const ColorTool = styled.div<{ $w: number }>`
  width: ${(p) => p.$w}px;
  height: 18px;
  flex: none;
  display: flex;
  align-items: center;
  padding-left: 3px;
  box-sizing: border-box;
`;

const TextColorA = styled.span`
  font: bold 14px/16px "Liberation Sans", sans-serif;
  color: #d8b45a;
`;

const BgColorA = styled.span`
  width: 15px;
  height: 15px;
  text-align: center;
  background: #f6f316;
  font: bold 14px/15px "Liberation Sans", sans-serif;
  color: #444;
`;

const Swatches = styled.div`
  width: 7px;
  height: 8px;
  margin: 6px 0 0 -2px;
  background: conic-gradient(#3b7fc4 25%, #7ab648 0 50%, #d8a030 0 75%, #c44a4a 0);
`;

const MiniCaret = styled.div`
  margin-left: 3px;
  border-left: 3px solid transparent;
  border-right: 3px solid transparent;
  border-top: 3px solid #555;
`;

const Collapse = styled.div`
  position: relative;
  width: 13px;
  height: 13px;
  flex: none;
  margin: 6px 2px 0 auto;
  box-sizing: border-box;
  border: 1px solid #777;
  background: #fff;
  &::after {
    content: "";
    position: absolute;
    left: 2px;
    top: 3px;
    border-left: 3.5px solid transparent;
    border-right: 3.5px solid transparent;
    border-bottom: 4px solid #222;
  }
`;

const EditArea = styled.div`
  position: relative;
  flex: 1;
  min-height: 0;
  border-bottom: 1px solid #777;
`;

const IBeam = styled.div`
  position: absolute;
  left: 274px;
  top: 105px;
  line-height: 0;
`;

const StatusBar = styled.div`
  position: relative;
  flex: none;
  height: 28px;
  box-sizing: border-box;
  padding: 0 12px 0 7px;
  display: flex;
  justify-content: space-between;
  font-size: 11px;
  line-height: 13px;
  color: #222;
  background: #eeeee6;
`;

const PathLabel = styled.span`
  margin-top: 6px;
`;

const Resize = styled.div`
  position: absolute;
  right: 0;
  bottom: 0;
  width: 11px;
  height: 11px;
  background: repeating-linear-gradient(135deg, transparent 0 1.5px, #777 1.5px 2.5px);
  clip-path: polygon(100% 0, 100% 100%, 0 100%);
`;

export default App;
